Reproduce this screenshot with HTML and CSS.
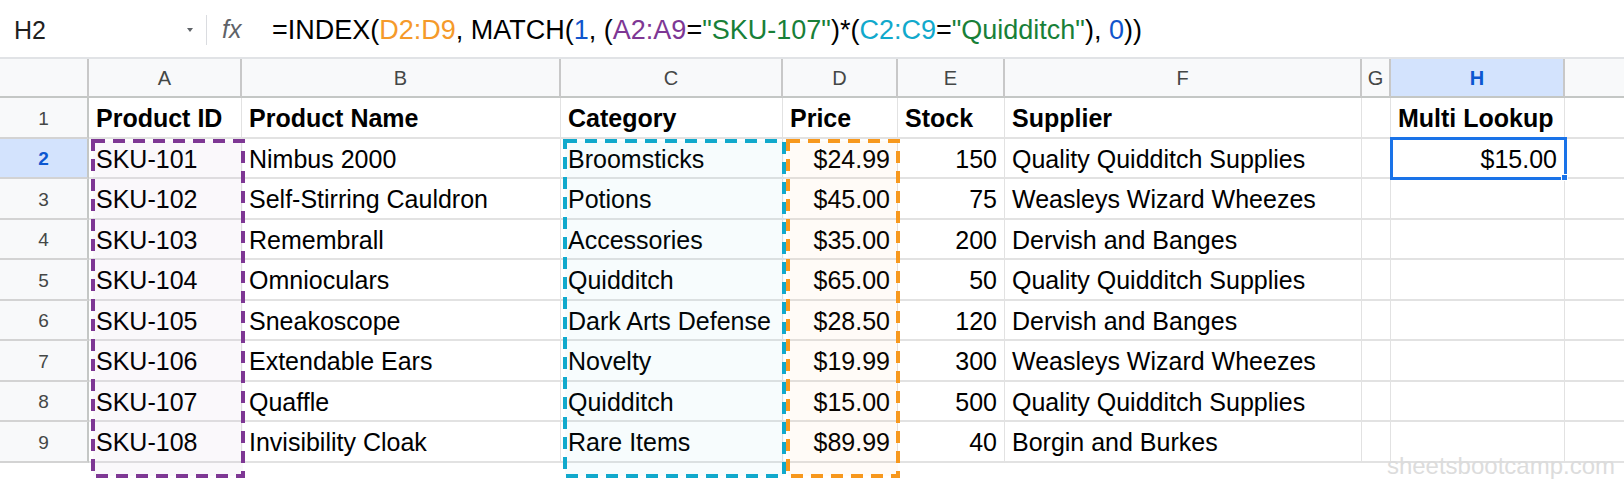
FILE: index.html
```html
<!DOCTYPE html>
<html>
<head>
<meta charset="utf-8">
<link rel="stylesheet" href="styles.css">
</head>
<body>
<div class="app">
  <div class="formula-bar">
    <div class="namebox"><span class="ref">H2</span><span class="caret"></span></div>
    <div class="sep"></div>
    <div class="fx">fx</div>
    <div class="formula">=INDEX(<span class="c-or">D2:D9</span>, MATCH(<span class="c-num">1</span>, (<span class="c-pu">A2:A9</span>=<span class="c-str">"SKU-107"</span>)*(<span class="c-cy">C2:C9</span>=<span class="c-str">"Quidditch"</span>), <span class="c-num">0</span>))</div>
  </div>
  <div class="sheet">
    <div class="grid">
      <div class="hd corner"></div>
      <div class="hd col">A</div>
      <div class="hd col">B</div>
      <div class="hd col">C</div>
      <div class="hd col">D</div>
      <div class="hd col">E</div>
      <div class="hd col">F</div>
      <div class="hd col">G</div>
      <div class="hd col sel">H</div>
      <div class="hd col last"></div>

      <div class="hd row">1</div>
      <div class="c b">Product ID</div>
      <div class="c b">Product Name</div>
      <div class="c b">Category</div>
      <div class="c b">Price</div>
      <div class="c b">Stock</div>
      <div class="c b">Supplier</div>
      <div class="c"></div>
      <div class="c b">Multi Lookup</div>
      <div class="c last"></div>

      <div class="hd row sel">2</div>
      <div class="c">SKU-101</div>
      <div class="c">Nimbus 2000</div>
      <div class="c">Broomsticks</div>
      <div class="c r">$24.99</div>
      <div class="c r">150</div>
      <div class="c">Quality Quidditch Supplies</div>
      <div class="c"></div>
      <div class="c r">$15.00</div>
      <div class="c last"></div>

      <div class="hd row">3</div>
      <div class="c">SKU-102</div>
      <div class="c">Self-Stirring Cauldron</div>
      <div class="c">Potions</div>
      <div class="c r">$45.00</div>
      <div class="c r">75</div>
      <div class="c">Weasleys Wizard Wheezes</div>
      <div class="c"></div>
      <div class="c"></div>
      <div class="c last"></div>

      <div class="hd row">4</div>
      <div class="c">SKU-103</div>
      <div class="c">Remembrall</div>
      <div class="c">Accessories</div>
      <div class="c r">$35.00</div>
      <div class="c r">200</div>
      <div class="c">Dervish and Banges</div>
      <div class="c"></div>
      <div class="c"></div>
      <div class="c last"></div>

      <div class="hd row">5</div>
      <div class="c">SKU-104</div>
      <div class="c">Omnioculars</div>
      <div class="c">Quidditch</div>
      <div class="c r">$65.00</div>
      <div class="c r">50</div>
      <div class="c">Quality Quidditch Supplies</div>
      <div class="c"></div>
      <div class="c"></div>
      <div class="c last"></div>

      <div class="hd row">6</div>
      <div class="c">SKU-105</div>
      <div class="c">Sneakoscope</div>
      <div class="c">Dark Arts Defense</div>
      <div class="c r">$28.50</div>
      <div class="c r">120</div>
      <div class="c">Dervish and Banges</div>
      <div class="c"></div>
      <div class="c"></div>
      <div class="c last"></div>

      <div class="hd row">7</div>
      <div class="c">SKU-106</div>
      <div class="c">Extendable Ears</div>
      <div class="c">Novelty</div>
      <div class="c r">$19.99</div>
      <div class="c r">300</div>
      <div class="c">Weasleys Wizard Wheezes</div>
      <div class="c"></div>
      <div class="c"></div>
      <div class="c last"></div>

      <div class="hd row">8</div>
      <div class="c">SKU-107</div>
      <div class="c">Quaffle</div>
      <div class="c">Quidditch</div>
      <div class="c r">$15.00</div>
      <div class="c r">500</div>
      <div class="c">Quality Quidditch Supplies</div>
      <div class="c"></div>
      <div class="c"></div>
      <div class="c last"></div>

      <div class="hd row">9</div>
      <div class="c">SKU-108</div>
      <div class="c">Invisibility Cloak</div>
      <div class="c">Rare Items</div>
      <div class="c r">$89.99</div>
      <div class="c r">40</div>
      <div class="c">Borgin and Burkes</div>
      <div class="c"></div>
      <div class="c"></div>
      <div class="c last"></div>
    </div>
    <div class="range range-a">
      <svg width="154" height="339" viewBox="0 0 154 339"><rect x="2" y="2" width="150" height="335" class="dash dash-a"/></svg>
    </div>
    <div class="range range-c">
      <svg width="223" height="339" viewBox="0 0 223 339"><rect x="2" y="2" width="219" height="335" class="dash dash-c"/></svg>
    </div>
    <div class="range range-d">
      <svg width="114" height="339" viewBox="0 0 114 339"><rect x="2" y="2" width="110" height="335" class="dash dash-d"/></svg>
    </div>
    <div class="selection"><span class="handle"></span></div>
    <div class="watermark">sheetsbootcamp.com</div>
  </div>
</div>
</body>
</html>
```
FILE: styles.css
```css
html, body {
  margin: 0;
  padding: 0;
  background: #ffffff;
}
body {
  width: 1624px;
  height: 502px;
  overflow: hidden;
  font-family: "Liberation Sans", Arial, sans-serif;
  color: #000;
}
.app {
  display: flex;
  flex-direction: column;
}
.formula-bar {
  height: 59px;
  border-bottom: 2px solid #e1e3e6;
  display: flex;
  align-items: center;
  padding-top: 3px;
  box-sizing: border-box;
}
.namebox {
  width: 206px;
  display: flex;
  align-items: center;
  justify-content: space-between;
  box-sizing: border-box;
  padding-left: 14px;
  padding-right: 13px;
}
.ref {
  font-size: 25px;
  color: #1f1f1f;
}
.caret {
  width: 0;
  height: 0;
  border-left: 3px solid transparent;
  border-right: 3px solid transparent;
  border-top: 4px solid #5f6368;
}
.sep {
  width: 1px;
  height: 30px;
  background: #dadce0;
}
.fx {
  font-size: 25px;
  font-style: italic;
  color: #5f6368;
  margin-left: 15px;
  width: 50px;
  padding-bottom: 2px;
}
.formula {
  font-size: 27px;
  color: #000;
  white-space: nowrap;
}
.c-or { color: #f59a2a; }
.c-pu { color: #7e3794; }
.c-cy { color: #11a9cc; }
.c-str { color: #188038; }
.c-num { color: #1155cc; }

.sheet {
  position: relative;
  height: 443px;
}
.grid {
  display: grid;
  grid-template-columns: 89px 153px 319px 222px 115px 107px 357px 29px 174px 59px;
  grid-template-rows: 39px repeat(9, 40.5px);
}
.hd {
  background: #f8f9fa;
  color: #444746;
  display: flex;
  align-items: center;
  justify-content: center;
  box-sizing: border-box;
}
.hd.col {
  font-size: 20px;
  border-right: 2px solid #c8c8c8;
  border-bottom: 2px solid #c4c7c5;
  padding-top: 2px;
}
.hd.corner {
  border-right: 2px solid #c8c8c8;
  border-bottom: 2px solid #c4c7c5;
}
.hd.col.last {
  border-right: none;
}
.hd.row {
  font-size: 19px;
  border-right: 2px solid #c4c7c5;
  border-bottom: 2px solid #d3d3d3;
  padding-top: 3px;
}
.hd.sel {
  background: #d3e3fd;
  color: #0b57d0;
  font-weight: bold;
}
.c {
  box-sizing: border-box;
  border-right: 1px solid #e2e2e2;
  border-bottom: 2px solid #e2e2e2;
  font-size: 25px;
  display: flex;
  align-items: center;
  padding: 3px 7px 0 7px;
  white-space: nowrap;
}
.c.b {
  font-weight: bold;
}
.c.r {
  justify-content: flex-end;
}
.c.last {
  border-right: none;
}
.range {
  position: absolute;
  top: 80px;
  height: 339px;
}
.range svg {
  display: block;
}
.dash {
  stroke-width: 4;
  stroke-dasharray: 12 8;
}
.dash-a {
  stroke: #7e3794;
  fill: rgba(126, 55, 148, 0.035);
}
.dash-c {
  stroke: #11a9cc;
  fill: rgba(17, 169, 204, 0.035);
}
.dash-d {
  stroke: #f7981d;
  fill: rgba(247, 152, 29, 0.035);
}
.range-a {
  left: 91px;
  width: 154px;
}
.range-c {
  left: 563px;
  width: 223px;
}
.range-d {
  left: 786px;
  width: 114px;
}
.selection {
  position: absolute;
  left: 1390px;
  top: 78px;
  width: 177px;
  height: 43px;
  box-sizing: border-box;
  border: 3px solid #1a73e8;
}
.handle {
  position: absolute;
  right: -4px;
  bottom: -4px;
  width: 5px;
  height: 5px;
  background: #1a73e8;
  border: 1px solid #fff;
}
.watermark {
  position: absolute;
  right: 9px;
  top: 393px;
  font-size: 24px;
  color: #dcdcdc;
  white-space: nowrap;
}
```
